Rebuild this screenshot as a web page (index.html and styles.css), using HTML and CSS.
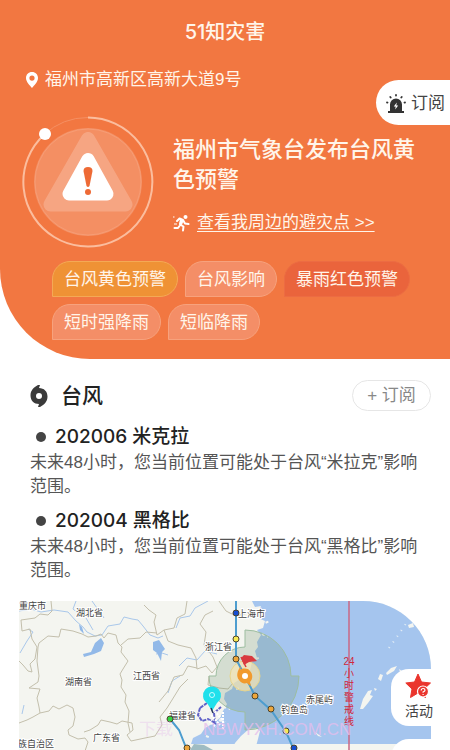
FILE: index.html
```html
<!DOCTYPE html>
<html lang="zh-CN">
<head>
  <meta charset="UTF-8">
  <meta name="viewport" content="width=device-width, initial-scale=1">
  <title>51知灾害</title>
  <link rel="stylesheet" href="styles.css">
</head>
<body>
  <header class="hero">
    <h1>51知灾害</h1>

    <div class="address">
      <svg width="14" height="18" viewBox="0 0 14 18">
        <path fill="#fff" fill-rule="evenodd" d="M7 1C3.500 1 1 3.600 1 7c0 4 3.800 7.200 6 10 2.200-2.800 6-6 6-10 0-3.400-2.500-6-6-6zm0 3.500a2.600 2.600 0 1 1 0 5.200 2.600 2.600 0 0 1 0-5.200z"/>
      </svg>
      <span>福州市高新区高新大道9号</span>
    </div>

    <button class="side-tab subscribe-tab" type="button">
      <svg width="20" height="20" viewBox="0 0 20 20">
        <path fill="#333" d="M4 17V10.500a6 6 0 0 1 12 0V17h2v2H2v-2z"/>
        <path fill="#fff" d="M10.800 8.500L7.800 12.500h1.900L9.200 15.500l3-4h-1.900z"/>
        <path stroke="#333" stroke-width="1.800" stroke-linecap="round" d="M10 1v.6M4.300 3l.4.500M15.700 3l-.4.500M1 8.500l.5.100M19 8.500l-.5.100"/>
      </svg>
      订阅
    </button>

    <section class="alert">
      <svg class="alert-icon" width="132" height="132" viewBox="0 0 132 132" fill="none">
        <circle cx="66" cy="66" r="54" fill="#fff" fill-opacity=".18"/>
        <circle cx="66" cy="66" r="53" stroke="#fff" stroke-opacity=".12"/>
        <path stroke="#fbbd9e" stroke-width="2" d="M66 1.500a64.500 64.500 0 1 1-44 17.200"/>
        <path stroke="#f58f62" stroke-width="1" d="M22 18.700A64.500 64.500 0 0 1 66 1.500"/>
        <g stroke="#fff" stroke-linejoin="round" fill="#fff">
          <path opacity=".2" stroke-width="14" d="M66 23l37.500 65.500h-75z"/>
          <path stroke-width="13" d="M66 43.500L85 78H47z"/>
        </g>
        <path fill="#ee6a35" d="M61.500 55q0-4 4.500-4t4.500 4l-3 15q-1.500 2-3 0z"/>
        <circle cx="66" cy="76" r="3" fill="#ee6a35"/>
        <circle cx="23" cy="18" r="6" fill="#fff"/>
      </svg>
      <div class="alert-text">
        <h2>福州市气象台发布台风黄色预警</h2>
        <div class="shelter">
          <svg width="17" height="18" viewBox="0 0 17 18">
            <circle cx="12.500" cy="3" r="2" fill="#fff"/>
            <path fill="none" stroke="#fff" stroke-width="2" stroke-linecap="round" stroke-linejoin="round" d="M4 7l2.500-2.500L10 6l2 3.500 3.500.5M9.500 6.500L7 10.500l3.500 2L10 16.500M6.500 12L5 14H1.500"/>
            <path fill="#fff" d="M7 5l3.500 1.500L9 11l-3-1z"/>
            <path stroke="#fff" d="M0 3h1.500M1 10h3"/>
          </svg>
          <a href="#">查看我周边的避灾点 &gt;&gt;</a>
        </div>
      </div>
    </section>

    <ul class="tags">
      <li class="tag yellow">台风黄色预警</li>
      <li class="tag">台风影响</li>
      <li class="tag red">暴雨红色预警</li>
      <li class="tag">短时强降雨</li>
      <li class="tag">短临降雨</li>
    </ul>
  </header>

  <main>
    <section class="typhoon">
      <div class="section-head">
        <svg width="18" height="22" viewBox="0 0 18 22">
          <path fill="#3a3a3a" fill-rule="evenodd" d="M10 0L9 3c5 0 8.500 3.500 8.500 8.500 0 5-3 8-7.500 10.500l-2 0 1-3C4 19 .5 15.500.5 10.500.5 5.500 3.500 2.500 8 0zM9 8a3 3 0 1 0 0 6 3 3 0 0 0 0-6z"/>
        </svg>
        <h2>台风</h2>
        <button class="subscribe" type="button">+ 订阅</button>
      </div>

      <article>
        <h3>202006 米克拉</h3>
        <p>未来48小时，您当前位置可能处于台风“米拉克”影响范围。</p>
      </article>
      <article>
        <h3>202004 黑格比</h3>
        <p>未来48小时，您当前位置可能处于台风“黑格比”影响范围。</p>
      </article>
    </section>

    <section class="map">
      <svg class="map-canvas" viewBox="0 0 412 149">
        <rect width="412" height="149" fill="#f4f5f0"/>

        <!-- sea and islands -->
        <path fill="#a5c5ee" d="M233 0l3 6 6-1-2 5 4 4-7 2 9 4-2 7-6 2 4 5-4 7 1 5-3 4 2 7-5 4-2 8-6 3-2 5-8 5-2 6-7 4-1 6 3 5-4 7-3 7-8 6-7 4-4 6-8 4-2 6h240V0z"/>
        <path fill="#f4f5f0" d="M213 149l3-7 6-7 8-7 7-1 4 3-2 8-3 11zM341 108l3-10 5-8 4-1-2 5 3 1-5 7-5 6zM359 78l2-5 3 1-2 6zM367 72l5-5 6-2-3 5-7 4zM355 87l3 1-2 2zM380 68l3 2-2 1zM296 131l7 5-4-1zM389 24l5-2 1 4-5 1z"/>
        <path fill="none" stroke="#e4eef6" stroke-width="2" stroke-dasharray="1 6" d="M370 47l10-14 8-12"/>
        <path fill="none" stroke="#f4f5f0" stroke-width="2" stroke-dasharray="3 3" d="M238 12l10-3M241 24l10-4M243 33l6 3M237 58l5-2M217 88l5-1M204 106l7 2M200 119l6 2M187 135l5 2"/>

        <!-- rivers and lakes -->
        <g fill="none" stroke="#a9c7ea" stroke-width="1">
          <path d="M0 10l12-2 10 3 13-2 14 2 8 9 7 6 4 5 8 4 7-1 6-9 12-2 4-7 8 2 6 1 5 6 7 9 8 3 5-2M57 0l-3 8 6 5M67 17l7 12M73 0l12 17M157 27l4-10 10-2 5-8 13-7M137 53l6-1 6 2M9 28l5 3-6 9-7 12M5 104l-2 9M149 92l4-12 8-5M160 65l8-8 10 2 8-9 12 3"/>
        </g>
        <path fill="#92b9e8" d="M76 42l6-5 3 5-3 8-7 3-10 3-1-3 8-2zM134 41l6-2 6 9-3 3-1 9-4-8-4-3zM60 23l3 3 2 7-4-4z"/>

        <!-- province borders -->
        <g fill="none" stroke="#c3bfac" stroke-width="1" stroke-linejoin="round">
          <path d="M32 0l1 10-4 4-8-1-5 4-14 2 1 11 8-2 2 10 5 8-2 12-5 5 2 8-4-1-5-6-4-4M19 46l1-4 9-7 11 1 2-8 12 2 9 3 6 3 8-1 5-2 3 4 4-5 8 2 2 8 4 4-1 5 7 9-5 8-3 5 2 6-1 7 5 8-1 7 4 9-1 12 2 9"/>
          <path d="M19 46l-1 14 2 15-1 6-9 6 11 1-3 9 2 9 1 6-7 4-6 3-8 3M21 112l9-2 4-5 6 3 8-4 6 3 2 9-2 9-5 4 1 5 9 4 7-1 3 4-3 9M65 131l6-2 8-5 3-5 9 2 7 2 5-3 10 2 1 7-6 5 4 6 14-3 10-2 7-11-2-8 7-9 5-8 8-13 8-8"/>
          <path d="M102 44l7-6 12-1 6-6 11 1M138 34l-3-13 2-7-7-5-5-5M138 34l7-5 10-2 3-10 8-4 2-13M145 29l4 11 10 4 13 3 5 10 1 11 9-3 6 7 5-6-4-10-9-12 2-13-6-8 5-9 8-4M178 67l-9-2-5 9-9 2-6 14-9 11M190 75l-1 9 11 3 9 1 5-6M200 0l7 10 10 5 12-3"/>
        </g>

        <!-- wind circle -->
        <path fill="#6f9470" fill-opacity=".24" stroke="#9dbda0" d="M226 29a46 46 0 0 1 46 46h8a54 54 0 0 1-54 54v-18a36 36 0 0 1-36-36h7a29 29 0 0 1 29-29z"/>
        <path fill="#7aa4ae" fill-opacity=".7" d="M171 149l4-6 10 1 9 5z"/>
        <circle cx="226" cy="75" r="15" fill="#f6e5b5" fill-opacity=".7" stroke="#e7d48b"/>

        <!-- 24h warning line -->
        <path stroke="#ca6785" stroke-width="1.500" d="M330 0v149"/>

        <!-- typhoon tracks -->
        <g fill="none" stroke="#4d9dcf" stroke-width="2">
          <path d="M217 0v58l9 17 10 20 16 14 15 22 8 18M151 118l9 11 8 20"/>
        </g>
        <g stroke="#4b432c" stroke-width="1">
          <circle cx="217" cy="12" r="3" fill="#174ed1"/>
          <circle cx="217" cy="38" r="3" fill="#f7eb55"/>
          <circle cx="217" cy="58" r="3" fill="#eda63b"/>
          <circle cx="236" cy="95" r="3" fill="#eda63b"/>
          <circle cx="252" cy="108" r="3" fill="#eda63b"/>
          <circle cx="267" cy="130" r="3" fill="#f7eb55"/>
          <circle cx="275" cy="147" r="3" fill="#174ed1"/>
          <circle cx="168" cy="147" r="3" fill="#eda63b"/>
        </g>

        <!-- typhoon eye and flag -->
        <path fill="#f19a2e" d="M222 65l-1 4c3-2 8-2 10 1 3 3 3 8 0 11l1 4c-2-1-3-2-4-3-3 1-6 0-8-3-3-4-2-9 2-14z"/>
        <circle cx="226" cy="75" r="3" fill="#fff"/>
        <path fill="#d93a3f" d="M222 57l3-3 8 1 5 5-8 1-5 3z"/>
        <path stroke="#d93a3f" stroke-width="1.500" d="M222 56l5 10"/>

        <!-- current position -->
        <path fill="none" stroke="#6163c8" stroke-width="2" stroke-dasharray="4 1" d="M181 107l-2 7 4 6 6-2 7 4-1-10 7-6M181 107l7-5"/>
        <path stroke="#fff" stroke-width="2" stroke-dasharray="2 1" d="M192 114l9 10M196 110l8 10M190 120l7 6M204 111v17"/>
        <path fill="#20e0eb" d="M193 110l-5-8a9 9 0 1 1 10 0z"/>
        <circle cx="193" cy="94" r="2.500" fill="none" stroke="#c9fbff"/>
        <path stroke="#28345c" stroke-width="1.500" d="M192 107l2 5"/>

        <g class="places">
          <text x="0" y="8">重庆市</text>
          <text x="57" y="15">湖北省</text>
          <text x="46" y="84">湖南省</text>
          <text x="114" y="78">江西省</text>
          <text x="74" y="140">广东省</text>
          <text x="-1" y="146">族自治区</text>
          <text x="186" y="49">浙江省</text>
          <text x="219" y="16">上海市</text>
          <text x="150" y="118">福建省</text>
          <text x="262" y="112">钓鱼岛</text>
          <text x="287" y="102">赤尾屿</text>
        </g>
        <circle cx="151" cy="118" r="3" fill="#34d344" stroke="#4b432c"/>
        <g class="warning-line">
          <text x="330" y="64">24</text>
          <text x="330" y="76">小</text>
          <text x="330" y="88">时</text>
          <text x="330" y="100">警</text>
          <text x="330" y="112">戒</text>
          <text x="330" y="124">线</text>
        </g>
        <text class="watermark faint" x="120" y="134">下载</text>
        <text class="watermark" x="184" y="134">NBWYXH.COM.CN</text>
      </svg>

      <div class="map-tabs">
        <button class="side-tab activity-tab" type="button">
          <svg width="28" height="26" viewBox="0 0 28 26">
            <path fill="#ea352d" stroke="#ea352d" stroke-width="1" stroke-linejoin="round" d="M13 1l3.500 8 9 1-6.500 6 1.500 8.500L13 20l-7.500 4.500L7 16 .8 10l8.700-1z"/>
            <circle cx="18" cy="18.500" r="5.500" fill="#ea352d" stroke="#fff" stroke-width="1.200"/>
            <path fill="none" stroke="#fff" stroke-width="1.200" d="M16.200 17.500q0-2 1.900-2t1.900 1.800q0 1-1.900 1.700v.8M18.100 21v1"/>
          </svg>
          活动
        </button>
        <button class="side-tab more-tab" type="button" aria-label="更多">
          <svg width="10" height="10" viewBox="0 0 10 10">
            <circle cx="5" cy="5" r="4" fill="#e9b64c"/>
          </svg>
        </button>
      </div>
    </section>
  </main>
</body>
</html>
```
FILE: styles.css
```css
* {
  box-sizing: border-box;
}

body {
  margin: 0;
  background: #fff;
  color: #222;
  font-family: "Liberation Sans", "Noto Sans CJK SC", sans-serif;
  font-size: 17px;
  line-height: 24px;
  overflow-x: hidden;
}

h1, h2, h3, p, ul {
  margin: 0;
  padding: 0;
}

h1, h2, h3 {
  font-family: Inter, "Noto Sans CJK SC", sans-serif;
  font-weight: 500;
}

button {
  border: none;
  background: #fff;
  padding: 0;
  font: inherit;
  cursor: pointer;
}

/* header */
.hero {
  position: relative;
  padding-bottom: 19px;
  background: #f27741;
  color: #fff5ea;
  border-bottom-left-radius: 90px;
}

.hero h1 {
  font-size: 20px;
  line-height: 64px;
  text-align: center;
}

.address {
  display: flex;
  align-items: center;
  gap: 6px;
  margin-top: 4px;
  padding-left: 25px;
}

.side-tab {
  display: flex;
  align-items: center;
  color: #444;
}

.subscribe-tab {
  position: absolute;
  top: 80px;
  right: 0;
  height: 45px;
  gap: 5px;
  padding: 2px 5px 0 10px;
  border-radius: 23px 0 0 23px;
}

.alert {
  display: flex;
  gap: 19px;
  margin-top: 24px;
  padding: 0 30px 0 22px;
}

.alert-icon {
  flex: none;
}

.alert-text {
  padding-top: 18px;
}

.alert h2 {
  font-size: 22px;
  line-height: 30px;
}

.shelter {
  display: flex;
  align-items: center;
  gap: 7px;
  margin-top: 17px;
}

.shelter a {
  color: inherit;
  text-underline-offset: 3px;
  white-space: nowrap;
}

.tags {
  display: flex;
  flex-wrap: wrap;
  gap: 7px;
  margin-top: 13px;
  padding: 0 30px 0 52px;
  list-style: none;
}

.tag {
  padding: 2px 11px 0;
  line-height: 32px;
  border: 1px solid #f7a27d;
  border-radius: 18px 18px 18px 0;
  background: #f48e67;
}

.tag.yellow {
  background: #ef9235;
  border-color: #f4a955;
}

.tag.red {
  background: #ea643c;
  border-color: #ec6c43;
}

/* typhoon list */
.typhoon {
  padding: 21px 19px 18px 30px;
}

.section-head {
  display: flex;
  align-items: center;
  gap: 13px;
  margin-bottom: 11px;
}

.section-head h2 {
  font-size: 21px;
}

.subscribe {
  width: 79px;
  height: 31px;
  margin-left: auto;
  border: 1px solid #e6e6e6;
  border-radius: 16px;
  color: #888;
  line-height: 29px;
}

article + article {
  margin-top: 7px;
}

article h3 {
  display: flex;
  align-items: center;
  gap: 9px;
  padding-left: 6px;
  font-size: 19px;
  line-height: 29px;
}

article h3::before {
  content: "";
  width: 10px;
  height: 10px;
  border-radius: 50%;
  background: #444;
}

article p {
  color: #555;
}

/* map */
.map {
  position: relative;
  margin: 0 19px;
}

.map-canvas {
  display: block;
  width: 100%;
  border-top-right-radius: 68px;
}

.places {
  font-size: 9px;
  fill: #444;
  stroke: #fff;
  stroke-width: 2px;
  paint-order: stroke;
}

.warning-line {
  font-size: 10px;
  fill: #d0273c;
  text-anchor: middle;
}

.watermark {
  font-size: 17px;
  fill: #e6bdec;
  fill-opacity: .8;
}

.watermark.faint {
  fill-opacity: .4;
}

.map-tabs {
  position: absolute;
  top: 68px;
  right: -19px;
  bottom: 0;
  display: flex;
  flex-direction: column;
  gap: 13px;
  overflow: hidden;
}

.activity-tab {
  flex: none;
  flex-direction: column;
  width: 59px;
  height: 57px;
  padding: 4px 3px 0 0;
  border-radius: 18px 0 0 18px;
  font-size: 14px;
}

.more-tab {
  flex: none;
  justify-content: center;
  width: 59px;
  height: 30px;
  border-radius: 18px 0 0 0;
}
```
